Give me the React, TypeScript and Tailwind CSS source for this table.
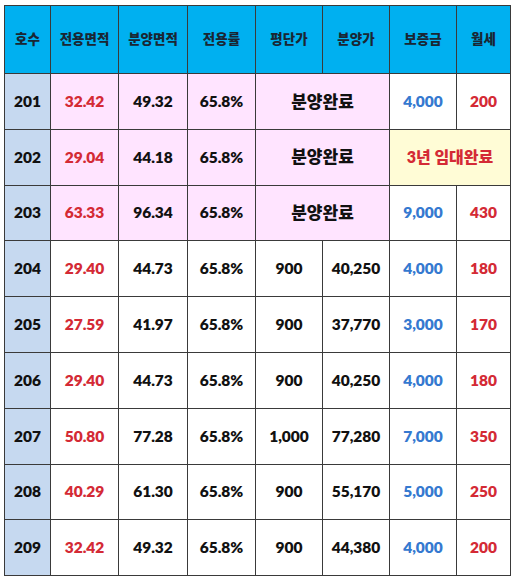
import React from 'react'

type Row = {
  no: string
  area: string
  supply: string
  rate: string
  unit?: string
  price?: string
  deposit?: string
  rent?: string
  sold?: boolean
  leased?: boolean
}

const rows: Row[] = [
  { no: '201', area: '32.42', supply: '49.32', rate: '65.8%', sold: true, deposit: '4,000', rent: '200' },
  { no: '202', area: '29.04', supply: '44.18', rate: '65.8%', sold: true, leased: true },
  { no: '203', area: '63.33', supply: '96.34', rate: '65.8%', sold: true, deposit: '9,000', rent: '430' },
  { no: '204', area: '29.40', supply: '44.73', rate: '65.8%', unit: '900', price: '40,250', deposit: '4,000', rent: '180' },
  { no: '205', area: '27.59', supply: '41.97', rate: '65.8%', unit: '900', price: '37,770', deposit: '3,000', rent: '170' },
  { no: '206', area: '29.40', supply: '44.73', rate: '65.8%', unit: '900', price: '40,250', deposit: '4,000', rent: '180' },
  { no: '207', area: '50.80', supply: '77.28', rate: '65.8%', unit: '1,000', price: '77,280', deposit: '7,000', rent: '350' },
  { no: '208', area: '40.29', supply: '61.30', rate: '65.8%', unit: '900', price: '55,170', deposit: '5,000', rent: '250' },
  { no: '209', area: '32.42', supply: '49.32', rate: '65.8%', unit: '900', price: '44,380', deposit: '4,000', rent: '200' },
]

const headers = ['호수', '전용면적', '분양면적', '전용률', '평단가', '분양가', '보증금', '월세']
const widths = ['w-[46px]', 'w-[68px]', 'w-[69px]', 'w-[68px]', 'w-[67px]', 'w-[67px]', 'w-[67px]', 'w-[54px]']

const cell = 'border border-[#3a3a3a] text-center align-middle p-0'

export default function App() {
  return (
    <div className="w-[515px] h-[583px] bg-white pt-[5px] pl-[4px]">
      <table
        className="border-collapse table-fixed border-[1.5px] border-[#333] font-extrabold text-[#111]"
        style={{ fontFamily: 'Lato, "Noto Sans CJK KR", sans-serif' }}
      >
        <colgroup>
          {widths.map((w, i) => (
            <col key={i} className={w} />
          ))}
        </colgroup>
        <thead>
          <tr className="h-[68px] bg-[#00b0f0]">
            {headers.map((h) => (
              <th key={h} className={`${cell} text-[13.5px] font-extrabold text-[#1a2633]`}>
                {h}
              </th>
            ))}
          </tr>
        </thead>
        <tbody className="text-[15.5px]">
          {rows.map((r) => (
            <tr key={r.no} className="h-[55.8px]">
              <td className={`${cell} bg-[#c6d9f0]`}>{r.no}</td>
              <td className={`${cell} text-[#d42a35] ${r.sold ? 'bg-[#ffe4ff]' : ''}`}>{r.area}</td>
              <td className={`${cell} ${r.sold ? 'bg-[#ffe4ff]' : ''}`}>{r.supply}</td>
              <td className={`${cell} ${r.sold ? 'bg-[#ffe4ff]' : ''}`}>{r.rate}</td>
              {r.sold ? (
                <td colSpan={2} className={`${cell} bg-[#ffe4ff] text-[17px]`}>
                  분양완료
                </td>
              ) : (
                <>
                  <td className={cell}>{r.unit}</td>
                  <td className={cell}>{r.price}</td>
                </>
              )}
              {r.leased ? (
                <td colSpan={2} className={`${cell} bg-[#fffcd6] text-[#d42a35] text-[16px]`}>
                  3년 임대완료
                </td>
              ) : (
                <>
                  <td className={`${cell} text-[#3579d0]`}>{r.deposit}</td>
                  <td className={`${cell} text-[#d42a35]`}>{r.rent}</td>
                </>
              )}
            </tr>
          ))}
        </tbody>
      </table>
    </div>
  )
}
